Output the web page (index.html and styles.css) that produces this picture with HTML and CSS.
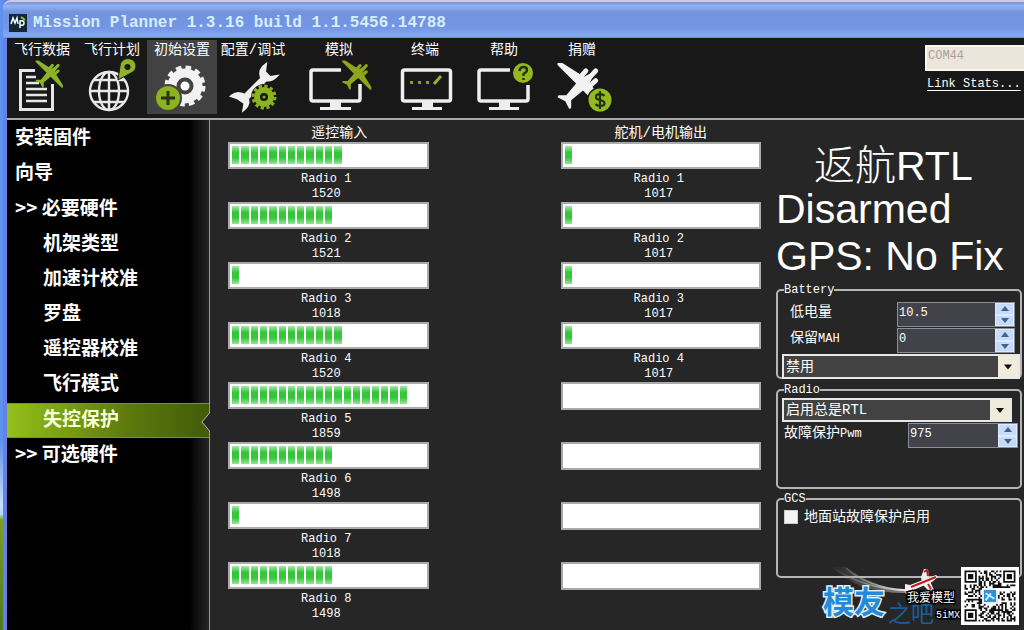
FILE: index.html
```html
<!DOCTYPE html>
<html lang="zh-CN">
<head>
<meta charset="utf-8">
<title>Mission Planner 1.3.16 build 1.1.5456.14788</title>
<link rel="stylesheet" href="styles.css">
</head>
<body>
<svg class="defs" aria-hidden="true">
  <symbol id="plane" viewBox="0 0 50 50">
    <path d="M39 10L36 11L28 15L6 1L1 1L1 3L20 22L10 34L2 34L1 36L9 40L13 48L15 47L15 39L27 29L46 48L48 48L48 43L34 21L38 13Z" fill="currentColor"/>
    <path d="M22 18L30 9M31 27L40 19M28 22L40 9" stroke="currentColor" stroke-width="5" stroke-linecap="round"/>
  </symbol>
</svg>
<div class="window">
  <header class="titlebar">
    <svg class="app-icon" viewBox="0 0 18 18" aria-hidden="true">
      <rect width="18" height="18" fill="#10283a"/>
      <path d="M2 10L4 4L6 9L8 4L9 10M11 14V7Q15 6 15 9T11 11" fill="none" stroke="#fff" stroke-width="1.5"/>
      <path d="M12 3L16 6" stroke="#8fbf20" stroke-width="2"/>
    </svg>
    <h1 class="title">Mission Planner 1.3.16 build 1.1.5456.14788</h1>
  </header>

  <div class="toolbar">
    <nav class="tools">
      <button class="tool">飞行数据
        <svg class="icon" viewBox="7 62 70 52"><path d="M35 70.500H20.500V109.500H52.500V84" fill="none" stroke="#e6e6e6" stroke-width="3"/><path d="M26 77H36M26 83H39M26 89H47M26 95H47M26 101H47" stroke="#e6e6e6" stroke-width="2.500"/><use href="#plane" x="34" y="60" width="31" height="29" color="#8fb328"/></svg>
      </button>
      <button class="tool">飞行计划
        <svg class="icon" viewBox="77 62 70 52"><g fill="none" stroke="#e8e8e8" stroke-width="2.400"><circle cx="109" cy="91" r="19"/><ellipse cx="109" cy="91" rx="10" ry="19"/><path d="M109 72V110M90 91H128M94 80H124M94 102H124"/></g><path d="M118 80L120 66A8 7.500 0 1 1 131 73Z" fill="#8fb328" stroke="#181818"/><circle cx="127.500" cy="67" r="3" fill="#181818"/></svg>
      </button>
      <button class="tool selected">初始设置
        <svg class="icon" viewBox="147 62 70 52"><circle cx="185" cy="86" r="13" fill="none" stroke="#f2f2f2" stroke-width="9"/><circle cx="185" cy="86" r="18" fill="none" stroke="#f2f2f2" stroke-width="5" stroke-dasharray="5.400 4.020"/><circle cx="185" cy="86" r="4.500" fill="#fff"/><circle cx="168" cy="98" r="14" fill="#424242"/><circle cx="168" cy="98" r="12" fill="#8bb31f"/><path d="M161 98H175M168 91V105" stroke="#26350a" stroke-width="3"/></svg>
      </button>
      <button class="tool mid">配置/调试
        <svg class="icon" viewBox="218 62 70 52"><path d="M242 101L268 75" stroke="#efefef" stroke-width="7"/><path d="M266 64Q258 69 261 78Q269 84 277 76L270 77L265 72Z" fill="#efefef" stroke="#efefef" stroke-width="2"/><path d="M232 96Q238 91 246 96Q251 103 244 109L245 103L238 98Z" fill="#efefef" stroke="#efefef" stroke-width="3"/><circle cx="264" cy="97" r="13" fill="#181818"/><circle cx="264" cy="97" r="7" fill="none" stroke="#8bb31f" stroke-width="6"/><circle cx="264" cy="97" r="11" fill="none" stroke="#8bb31f" stroke-width="3" stroke-dasharray="3.200 2.560"/><circle cx="264" cy="97" r="1.500" fill="#8bb31f"/></svg>
      </button>
      <button class="tool wide">模拟
        <svg class="icon" viewBox="304 62 70 52"><path d="M341 70H313Q311 70 311 72V99Q311 101 313 101H358Q360 101 360 99V84" fill="none" stroke="#eee" stroke-width="3.500"/><path d="M330 102H341V107H351V110H320V107H330Z" fill="#eee"/><use href="#plane" x="341" y="60" width="32" height="31" color="#8fa51c"/></svg>
      </button>
      <button class="tool mid">终端
        <svg class="icon" viewBox="390 62 70 52"><rect x="402.500" y="70" width="48" height="31" rx="2" fill="none" stroke="#eee" stroke-width="3.500"/><path d="M422 102H433V107H442V110H412V107H422Z" fill="#eee"/><path d="M410 82.500H430" stroke="#8a9a35" stroke-width="3" stroke-dasharray="3 5"/><path d="M434 84L441 76" stroke="#9bad35" stroke-width="3"/></svg>
      </button>
      <button class="tool large">帮助
        <svg class="icon" viewBox="469 62 70 52"><path d="M510 70H481Q479 70 479 72V99Q479 101 481 101H526Q528 101 528 99V85" fill="none" stroke="#eee" stroke-width="3.500"/><path d="M499 102H510V107H519V110H489V107H499Z" fill="#eee"/><circle cx="523" cy="73" r="10" fill="#95b81f"/><path d="M519.500 71Q520 67 523.500 67Q527 67 527 70Q527 72 523.500 74V76M523.500 78V80" fill="none" stroke="#263008" stroke-width="2.400"/></svg>
      </button>
      <button class="tool">捐赠
        <svg class="icon" viewBox="547 62 70 52"><use href="#plane" x="556" y="62" width="50" height="49" color="#f2f2f2"/><circle cx="600" cy="100" r="13" fill="#181818"/><circle cx="600" cy="100" r="11.500" fill="#90ba20"/><path d="M604.500 96Q603 94 600 94Q596 94 596 97Q596 99.500 600 100Q604.500 101 604.500 103.500Q604.500 106 600 106Q597 106 595.500 104M600 91V109" fill="none" stroke="#20300a" stroke-width="2.200"/></svg>
      </button>
    </nav>
    <div class="connection">
      <select class="port" aria-label="COM" disabled><option>COM44</option></select>
      <a class="stats" href="#stats">Link Stats...</a>
    </div>
  </div>

  <div class="content">
    <nav class="sidebar">
      <a href="#firmware">安装固件</a>
      <a href="#wizard">向导</a>
      <a class="parent" href="#required">&gt;&gt; 必要硬件</a>
      <a class="child" href="#frame">机架类型</a>
      <a class="child" href="#accel">加速计校准</a>
      <a class="child" href="#compass">罗盘</a>
      <a class="child" href="#rc">遥控器校准</a>
      <a class="child" href="#modes">飞行模式</a>
      <a class="child current" href="#failsafe" aria-current="page">失控保护
        <svg class="notch" viewBox="0 0 9 20" aria-hidden="true"><path d="M9 0L1 10L9 20Z" fill="#262626"/><path d="M8.500 0V1L1 10L8.500 19V20" fill="none" stroke="#bbb"/></svg>
      </a>
      <a class="parent" href="#optional">&gt;&gt; 可选硬件</a>
    </nav>

    <main class="channels">
      <section class="column">
        <h2 class="heading input-heading">遥控输入</h2>
        <div class="channel"><div class="bar" data-blocks="12"></div><span>Radio 1</span><span>1520</span></div>
        <div class="channel"><div class="bar" data-blocks="11"></div><span>Radio 2</span><span>1521</span></div>
        <div class="channel"><div class="bar" data-blocks="1"></div><span>Radio 3</span><span>1018</span></div>
        <div class="channel"><div class="bar" data-blocks="12"></div><span>Radio 4</span><span>1520</span></div>
        <div class="channel"><div class="bar" data-blocks="19"></div><span>Radio 5</span><span>1859</span></div>
        <div class="channel"><div class="bar" data-blocks="11"></div><span>Radio 6</span><span>1498</span></div>
        <div class="channel"><div class="bar" data-blocks="1"></div><span>Radio 7</span><span>1018</span></div>
        <div class="channel"><div class="bar" data-blocks="11"></div><span>Radio 8</span><span>1498</span></div>
      </section>
      <section class="column">
        <h2 class="heading">舵机/电机输出</h2>
        <div class="channel"><div class="bar" data-blocks="1"></div><span>Radio 1</span><span>1017</span></div>
        <div class="channel"><div class="bar" data-blocks="1"></div><span>Radio 2</span><span>1017</span></div>
        <div class="channel"><div class="bar" data-blocks="1"></div><span>Radio 3</span><span>1017</span></div>
        <div class="channel"><div class="bar" data-blocks="1"></div><span>Radio 4</span><span>1017</span></div>
        <div class="channel"><div class="bar" data-blocks="0"></div></div>
        <div class="channel"><div class="bar" data-blocks="0"></div></div>
        <div class="channel"><div class="bar" data-blocks="0"></div></div>
        <div class="channel"><div class="bar" data-blocks="0"></div></div>
      </section>
    </main>

    <aside class="status">
      <div class="mode"><span class="mode-name">返航</span>RTL</div>
      <div class="state">Disarmed</div>
      <div class="state">GPS: No Fix</div>

      <fieldset class="group battery">
        <legend>Battery</legend>
        <div class="field">
          <label for="low">低电量</label>
          <div class="spinner"><input id="low" type="text" value="10.5"><div class="steps"><button aria-label="增加"><svg viewBox="0 0 8 5"><path d="M0 5L4 0L8 5Z"/></svg></button><button aria-label="减少"><svg viewBox="0 0 8 5"><path d="M0 0L4 5L8 0Z"/></svg></button></div></div>
        </div>
        <div class="field">
          <label for="mah">保留<span class="latin">MAH</span></label>
          <div class="spinner"><input id="mah" type="text" value="0"><div class="steps"><button aria-label="增加"><svg viewBox="0 0 8 5"><path d="M0 5L4 0L8 5Z"/></svg></button><button aria-label="减少"><svg viewBox="0 0 8 5"><path d="M0 0L4 5L8 0Z"/></svg></button></div></div>
        </div>
        <div class="combo"><select aria-label="Battery"><option>禁用</option></select><svg class="arrow" viewBox="0 0 20 20"><path d="M6 8H14L10 13Z" fill="#111"/></svg></div>
      </fieldset>

      <fieldset class="group radio">
        <legend>Radio</legend>
        <div class="combo"><select aria-label="Radio"><option>启用总是RTL</option></select><svg class="arrow" viewBox="0 0 20 20"><path d="M6 8H14L10 13Z" fill="#111"/></svg></div>
        <div class="field">
          <label for="pwm">故障保护<span class="latin">Pwm</span></label>
          <div class="spinner"><input id="pwm" type="text" value="975"><div class="steps"><button aria-label="增加"><svg viewBox="0 0 8 5"><path d="M0 5L4 0L8 5Z"/></svg></button><button aria-label="减少"><svg viewBox="0 0 8 5"><path d="M0 0L4 5L8 0Z"/></svg></button></div></div>
        </div>
      </fieldset>

      <fieldset class="group gcs">
        <legend>GCS</legend>
        <label class="check"><input type="checkbox">地面站故障保护启用</label>
      </fieldset>
    </aside>
  </div>
</div>

<div class="watermark">
  <svg class="swoosh" viewBox="820 562 140 60" aria-hidden="true">
    <defs><linearGradient id="trail"><stop offset="0" stop-color="#aaa" stop-opacity="0"/><stop offset=".5" stop-color="#aaa" stop-opacity=".7"/><stop offset="1" stop-color="#eee"/></linearGradient></defs>
    <path d="M832 567Q858 594 908 593Q868 584 846 567Z" fill="url(#trail)" opacity=".5"/>
    <path d="M832 567Q862 588 906 591M846 568Q868 588 906 590" fill="none" stroke="url(#trail)" stroke-width="1.500"/>
    <path d="M905 592L905 584L910 585L936 575L938 577L932 582L911 591L906 594Z" fill="#f6f1ee"/>
    <path d="M921 577L924 569L928 569L929 579L934 590L929 591L922 584Z" fill="#eee"/>
    <path d="M911 587L936 577M924 572L927 570L928 576M928 584L931 589" fill="none" stroke="#bd1c20" stroke-width="2"/>
  </svg>
  <span class="logo-main">模友</span>
  <span class="logo-sub">之吧</span>
  <span class="caption">我爱模型</span>
  <span class="site">5iMX</span>
  <svg class="qr" viewBox="-2 -2 33 33" role="img" aria-label="QR"></svg>
</div>
<script src="app.js"></script>
</body>
</html>
```
FILE: styles.css
```css
* { box-sizing: border-box; }

body {
  margin: 0;
  min-height: 100vh;
  display: flex;
  position: relative;
  overflow: hidden;
  color: #fff;
  background: linear-gradient(#5f92ee 0, #5f92ee 70%, #c4defa 80%, #b8dcf8 514px, #7d9c28 520px, #4c7a22);
  font-family: "Liberation Mono", "Noto Sans CJK SC", monospace;
  font-size: 12px;
}

button, input, select { font: inherit; color: inherit; }

.defs { position: absolute; width: 0; height: 0; }

.window {
  flex: 1;
  min-width: 0;
  margin-left: 3px;
  border-left: 4px solid #6680e4;
  display: flex;
  flex-direction: column;
}

.titlebar {
  height: 38px;
  margin-left: -4px;
  padding: 6px 0 0 6px;
  display: flex;
  align-items: center;
  gap: 6px;
  border-top: 2px solid #c9c9e8;
  border-top-left-radius: 8px;
  background: linear-gradient(#7e91cd 0, #92b2f5 4px, #7393df 10px, #7595e5 26px, #85aaf6 34px, #6d8cdc);
}
.app-icon { width: 18px; height: 18px; }
.title { margin: 0; font-size: 16px; line-height: 20px; color: #d4efff; }

.toolbar {
  height: 82px;
  display: flex;
  justify-content: space-between;
  background: #181818;
  border-bottom: 2px solid #a8a8a8;
}
.tools { display: flex; padding-top: 2px; }
.tool {
  width: 70px;
  height: 74px;
  padding: 0;
  border: 0;
  background: none;
  display: flex;
  flex-direction: column;
  align-items: center;
  gap: 1px;
  font-size: 14px;
  line-height: 21px;
}
.tool.selected { background: #424242; }
.tool.mid { width: 72px; }
.tool.wide { width: 100px; }
.tool.large { width: 86px; }
.icon { width: 70px; height: 52px; overflow: visible; }

.connection { width: 99px; padding-top: 7px; display: flex; flex-direction: column; gap: 4px; }
.port {
  appearance: none;
  height: 26px;
  padding: 0 1px 4px;
  border: 2px solid #faf6ee;
  border-right: 0;
  border-radius: 0;
  background: #ece5dc;
  color: #a9a294;
  opacity: 1;
}
.stats { padding-left: 2px; line-height: 18px; color: #fff; text-underline-offset: 3px; }

.content { flex: 1; display: flex; background: #262626; }

.sidebar {
  width: 203px;
  padding-top: 2px;
  border-right: 1px solid #999;
  background: linear-gradient(90deg, #000 90%, #262626);
  font-size: 19px;
  font-weight: bold;
}
.sidebar a {
  display: block;
  height: 35px;
  padding-left: 8px;
  line-height: 28px;
  color: #fff;
  text-decoration: none;
  font-family: "Noto Sans CJK SC", sans-serif;
}
.sidebar .parent { margin-top: 1px; }
.sidebar .child { padding-left: 36px; }
.sidebar .current {
  position: relative;
  border: 1px solid #779923;
  border-width: 1px 0;
  background: linear-gradient(90deg, #94c01b, #5c7a0c 60%, #425c08);
  color: #f5ffd8;
}
.notch { position: absolute; right: -1px; top: 8px; width: 9px; height: 20px; }

.channels {
  flex: 1;
  display: grid;
  grid-template-columns: 1fr 1fr;
  gap: 132px;
  padding: 4px 15px 0 18px;
}
.heading { margin: 0; text-align: center; font-size: 14px; font-weight: normal; line-height: 18px; }
.input-heading { padding-left: 22px; }
.channel {
  height: 60px;
  padding-right: 0;
  display: flex;
  flex-direction: column;
  align-items: center;
  line-height: 15px;
}
.channel span { padding-right: 4px; }
.bar {
  width: 100%;
  height: 28px;
  margin-bottom: 3px;
  padding: 2px 1px 3px 2px;
  border: 2px solid #aaa;
  background: #fff;
  display: grid;
  grid-template-columns: repeat(21, 1fr);
  gap: 2px;
}
.channel .block { padding: 0; background: linear-gradient(#a5eaa5, #35c63c 35%, #35c63c 65%, #98e598); }

.status { width: 248px; padding-right: 2px; }
.mode, .state { font-family: "Liberation Sans", sans-serif; font-size: 41px; line-height: 47px; white-space: nowrap; }
.mode { height: 47px; padding: 0 0 0 38px; margin-top: 19px; }
.mode-name { font-family: "Noto Sans CJK SC", sans-serif; font-weight: 300; }

.group {
  min-width: 0;
  margin: 0;
  padding: 0 0 0 4px;
  border: 2px solid #b5b5b5;
  border-radius: 5px;
}
.group legend { margin-left: 2px; padding: 0; line-height: 16px; }
.battery { height: 97px; margin-top: 2px; padding-top: 4px; }
.radio { height: 107px; margin-top: 3px; }
.gcs { height: 87px; margin-top: 2px; }

.field { display: flex; justify-content: space-between; align-items: flex-start; padding: 0 5px 0 8px; font-size: 12px; }
.field label, .check { font-size: 14px; line-height: 20px; }
.field .latin { font-size: 12px; }
.battery .field { height: 26px; }
.radio .field { padding: 1px 2px 0 2px; }
.spinner { width: 118px; height: 25px; display: flex; border: 1px solid #8a8f98; background: #42434a; }
.radio .spinner { width: 110px; }
.spinner input { flex: 1; min-width: 0; padding: 0 0 4px 1px; border: 0; background: none; }
.steps { width: 19px; display: flex; flex-direction: column; background: #c6dbfa; }
.steps button { flex: 1; padding: 0; border: 1px solid #deebff; background: none; display: grid; place-items: center; }
.steps svg { width: 8px; height: 5px; fill: #43618f; }

.combo { display: flex; height: 25px; border: 2px solid #e8e8e8; background: #424242; font-size: 14px; }
.combo select { flex: 1; min-width: 0; appearance: none; padding: 0 2px; border: 0; background: none; }
.combo .arrow { width: 20px; background: #f0ecdc; }
.radio .combo { height: 24px; margin-right: 8px; }

.check { display: flex; align-items: center; gap: 6px; padding-left: 2px; }
.check input { appearance: none; width: 14px; height: 14px; margin: 0; background: #f4f4f4; border: 1px solid #ccc; }

.watermark { position: absolute; right: 0; bottom: 0; width: 204px; height: 68px; }
.watermark > * { position: absolute; white-space: nowrap; }
.swoosh { left: 0; top: 0; width: 140px; height: 60px; }
.logo-main, .logo-sub { font-family: "Noto Sans CJK SC", sans-serif; font-weight: bold; }
.logo-main { left: 3px; top: 21px; font-size: 31px; line-height: 34px; color: #2489d6; -webkit-text-stroke: 3px #dff0fc; paint-order: stroke fill; }
.logo-sub { left: 68px; top: 38px; font-size: 23px; line-height: 24px; font-weight: normal; color: #1c5d99; }
.caption, .site { font-size: 12px; line-height: 14px; -webkit-text-stroke: 3px #000; paint-order: stroke fill; }
.caption { left: 87px; top: 28px; font-family: "Noto Sans CJK SC", sans-serif; }
.site { right: 64px; top: 47px; font-size: 10px; }
.qr { right: 5px; bottom: 5px; width: 58px; height: 58px; background: #fff; }
```
FILE: app.js
```js
// Fill each channel bar with its blocks.
document.querySelectorAll('.bar').forEach(function (bar) {
  var n = Number(bar.dataset.blocks);
  bar.setAttribute('role', 'progressbar');
  bar.setAttribute('aria-valuemax', '21');
  bar.setAttribute('aria-valuenow', n);
  for (var i = 0; i < n; i++) {
    var block = document.createElement('span');
    block.className = 'block';
    bar.appendChild(block);
  }
});

// Draw the QR modules on a 29 x 29 grid.
(function () {
  var size = 29, d = '', seed = 5417;
  function finder(x, y) {
    var cx = x < 8 ? 3 : x > 20 ? 25 : -9;
    var cy = y < 8 ? 3 : y > 20 ? 25 : -9;
    if (cx < 0 || cy < 0 || (cx === 25 && cy === 25)) return null;
    var r = Math.max(Math.abs(x - cx), Math.abs(y - cy));
    return r !== 2 && r < 4;
  }
  for (var y = 0; y < size; y++) {
    for (var x = 0; x < size; x++) {
      seed = (seed * 1103515245 + 12345) % 2147483648;
      var f = finder(x, y);
      if (f === null ? (seed >> 12) % 2 : f) d += 'M' + x + ' ' + y + 'h1v1h-1z';
    }
  }
  document.querySelector('.qr').innerHTML =
    '<path d="' + d + '" fill="#111"/>' +
    '<rect x="10.5" y="10.5" width="8" height="8" fill="#2b93dc" stroke="#fff"/>' +
    '<path d="M12 13L17 16M12 17L15 13" stroke="#d8efff"/>';
})();
```
